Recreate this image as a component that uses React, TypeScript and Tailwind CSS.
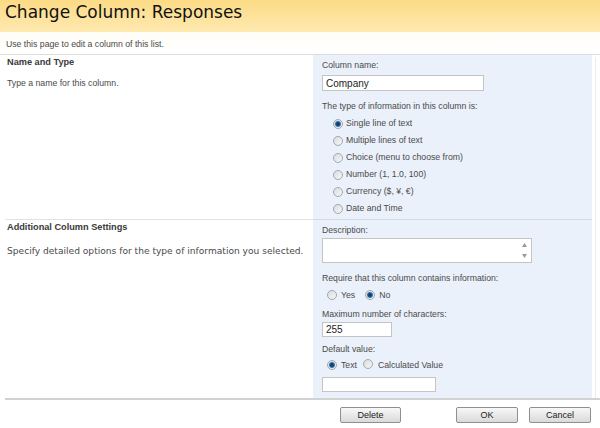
import type { ReactNode } from 'react';

function Radio({ checked }: { checked?: boolean }) {
  return (
    <span className="inline-flex h-[10px] w-[10px] shrink-0 items-center justify-center rounded-full border border-[#a3a7ae] bg-gradient-to-br from-[#d9dce1] to-[#f7f7f7]">
      {checked && (
        <span className="h-[6px] w-[6px] rounded-full bg-[radial-gradient(circle,#123f6b_30%,#4b96d6_80%)]" />
      )}
    </span>
  );
}

function Choice({ checked, children }: { checked?: boolean; children: ReactNode }) {
  return (
    <div className="flex h-[17px] items-center">
      <Radio checked={checked} />
      <span className="ml-[3px]">{children}</span>
    </div>
  );
}

function Button({ label, className = '' }: { label: string; className?: string }) {
  return (
    <div
      className={`flex h-[16px] items-center justify-center rounded-[2px] border border-[#8f8f8f] bg-gradient-to-b from-[#f8f8f8] to-[#dadada] text-[9px] leading-none text-[#222] ${className}`}
    >
      {label}
    </div>
  );
}

export default function App() {
  const types = [
    'Single line of text',
    'Multiple lines of text',
    'Choice (menu to choose from)',
    'Number (1, 1.0, 100)',
    'Currency ($, ¥, €)',
    'Date and Time',
  ];

  return (
    <div className="relative h-[428px] w-[600px] overflow-hidden bg-white font-['Liberation_Sans',Arial,sans-serif] text-[8.7px] leading-[11px] text-[#4a4a4a]">
      {/* title bar */}
      <div className="h-[32px] bg-gradient-to-b from-[#fcdb85] to-[#fee9b0] px-[5px] pt-[2px]">
        <h1 className="font-['DejaVu_Sans',Verdana,sans-serif] text-[17px] leading-[20px] text-[#111]">
          Change Column: Responses
        </h1>
      </div>

      <div className="h-[23px] border-b border-[#dcdcdc] bg-gradient-to-b from-[#fffdf7] to-white pl-[6px] pt-[7px]">
        Use this page to edit a column of this list.
      </div>

      <div className="flex">
        <div className="ml-[5px] w-[587px]">
          {/* Name and Type */}
          <div className="flex h-[165px]">
            <div className="w-[308px] border-b border-[#e2e2e2] pl-[2px] pt-[2px]">
              <div className="text-[9.2px] font-bold text-[#3a3a3a]">Name and Type</div>
              <div className="mt-[10px]">Type a name for this column.</div>
            </div>
            <div className="flex-1 border-b border-[#d3dae6] bg-[#ebf1fb] pl-[9px] pt-[5px]">
              <div>Column name:</div>
              <div className="mt-[4px] flex h-[16px] w-[162px] items-center border border-[#c4c4c4] bg-white pl-[3px] text-[10px] text-[#222]">
                Company
              </div>
              <div className="mt-[10px]">The type of information in this column is:</div>
              <div className="ml-[11px] mt-[3px]">
                {types.map((t, i) => (
                  <Choice key={t} checked={i === 0}>
                    {t}
                  </Choice>
                ))}
              </div>
            </div>
          </div>

          {/* Additional Column Settings */}
          <div className="flex h-[178px]">
            <div className="w-[308px] pl-[2px] pt-[2px]">
              <div className="text-[9.2px] font-bold text-[#3a3a3a]">Additional Column Settings</div>
              <div className="mt-[12px] font-['DejaVu_Sans',Verdana,sans-serif] text-[9.1px] leading-[12px] text-[#4a4a4a]">
                Specify detailed options for the type of information you selected.
              </div>
            </div>
            <div className="flex-1 bg-[#ebf1fb] pl-[9px] pt-[5px]">
              <div>Description:</div>
              <div className="relative mt-[2px] h-[25px] w-[210px] border border-[#c4c4c4] bg-white">
                <svg className="absolute right-[4px] top-[4px]" width="5" height="4" viewBox="0 0 5 4">
                  <path d="M0 4 L2.5 0 L5 4 Z" fill="#9a9a9a" />
                </svg>
                <svg className="absolute bottom-[4px] right-[4px]" width="5" height="4" viewBox="0 0 5 4">
                  <path d="M0 0 L2.5 4 L5 0 Z" fill="#9a9a9a" />
                </svg>
              </div>
              <div className="mt-[10px]">Require that this column contains information:</div>
              <div className="mt-[3px] flex h-[16px] items-center pl-[5px]">
                <Radio />
                <span className="ml-[4px]">Yes</span>
                <span className="ml-[10px]">
                  <Radio checked />
                </span>
                <span className="ml-[4px]">No</span>
              </div>
              <div className="mt-[6px]">Maximum number of characters:</div>
              <div className="mt-[2px] flex h-[15px] w-[70px] items-center border border-[#c4c4c4] bg-white pl-[3px] text-[10px] text-[#222]">
                255
              </div>
              <div className="mt-[7px]">Default value:</div>
              <div className="mt-[2px] flex h-[16px] items-center pl-[5px]">
                <Radio checked />
                <span className="ml-[4px]">Text</span>
                <span className="ml-[6px]">
                  <Radio />
                </span>
                <span className="ml-[5px]">Calculated Value</span>
              </div>
              <div className="mt-[4px] h-[15px] w-[114px] border border-[#c4c4c4] bg-white" />
            </div>
          </div>
        </div>
        <div className="ml-[3px] mt-[2px] w-px bg-[#ececec]" />
      </div>

      <div className="ml-[5px] border-t-2 border-[#d2d2d2]">
        <div className="flex pl-[335px] pt-[7px]">
          <Button label="Delete" className="w-[61px]" />
          <Button label="OK" className="ml-[55px] w-[62px]" />
          <Button label="Cancel" className="ml-[11px] w-[62px]" />
        </div>
      </div>
    </div>
  );
}
